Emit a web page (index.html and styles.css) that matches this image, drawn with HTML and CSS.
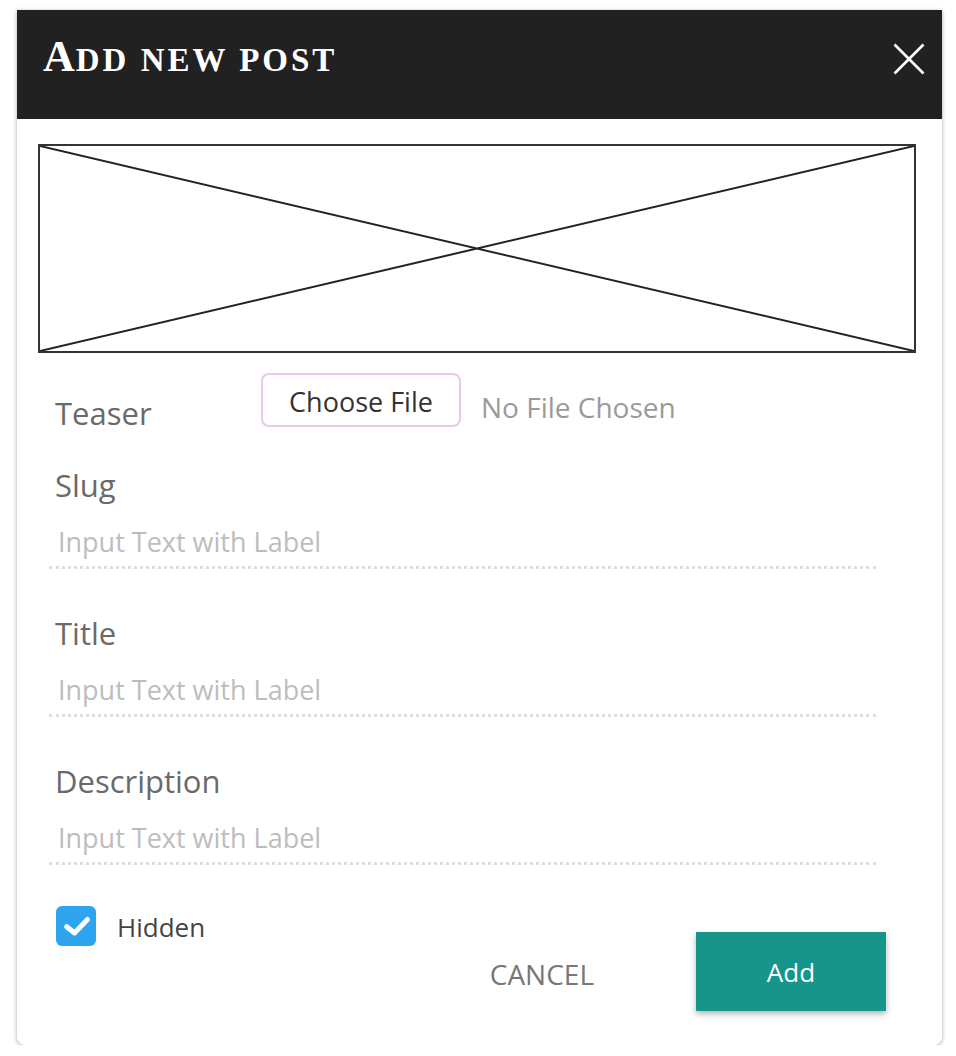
FILE: index.html
```html
<!DOCTYPE html>
<html lang="en">
<head>
<meta charset="utf-8">
<title>Add new post</title>
<link rel="stylesheet" href="styles.css">
</head>
<body>
<div class="modal">
  <header class="modal-header">
    <h1 class="modal-title">Add new post</h1>
    <button class="close-btn" aria-label="Close">
      <svg width="32" height="32" viewBox="0 0 32 32"><path d="M1.5 1.5 L30.5 30.5 M30.5 1.5 L1.5 30.5" stroke="#fff" stroke-width="2.6" fill="none"/></svg>
    </button>
  </header>
  <div class="modal-body">
    <div class="image-placeholder">
      <svg class="ph-svg" viewBox="0 0 100 100" preserveAspectRatio="none"><path d="M0 0 L100 100 M100 0 L0 100" stroke="#222" stroke-width="2" vector-effect="non-scaling-stroke" fill="none"/></svg>
    </div>
    <div class="teaser-row">
      <span class="teaser-label">Teaser</span>
      <button class="file-btn">Choose File</button>
      <span class="file-status">No File Chosen</span>
    </div>
    <div class="field field-first">
      <div class="field-label">Slug</div>
      <div class="field-input">Input Text with Label</div>
    </div>
    <div class="field">
      <div class="field-label">Title</div>
      <div class="field-input">Input Text with Label</div>
    </div>
    <div class="field">
      <div class="field-label">Description</div>
      <div class="field-input">Input Text with Label</div>
    </div>
    <div class="footer">
      <label class="check">
        <span class="check-box">
          <svg width="40" height="40" viewBox="0 0 40 40"><path d="M10.7 20.7 L18.5 27 L31.5 13.5" stroke="#fff" stroke-width="5" stroke-linecap="round" stroke-linejoin="round" fill="none"/></svg>
        </span>
        <span class="check-text">Hidden</span>
      </label>
      <div class="actions">
        <button class="cancel-btn">CANCEL</button>
        <button class="add-btn">Add</button>
      </div>
    </div>
  </div>
</div>
</body>
</html>
```

FILE: styles.css
```css
* { box-sizing: border-box; }
html, body { margin: 0; padding: 0; background: #fff; }
body { font-family: "Open Sans", "Noto Sans", sans-serif; }

.modal {
  width: 925px;
  margin: 10px 0 0 17px;
  background: #fff;
  border-radius: 0 0 8px 8px;
  box-shadow: 0 1px 4px rgba(0, 0, 0, 0.35);
}

.modal-header {
  height: 109px;
  background: #212121;
  display: flex;
  align-items: center;
  justify-content: space-between;
  padding: 0 17px 0 26px;
}
.modal-title {
  margin: 0;
  padding-bottom: 16px;
  font-family: "Liberation Serif", "DejaVu Serif", serif;
  font-weight: bold;
  color: #fff;
  font-size: 33px;
  text-transform: uppercase;
  letter-spacing: 3px;
  line-height: 1;
}
.modal-title::first-letter { font-size: 44px; letter-spacing: 1px; }

.close-btn {
  background: none;
  border: 0;
  padding: 0;
  width: 32px;
  height: 32px;
  margin-bottom: 12px;
  cursor: pointer;
}
.close-btn svg { display: block; }

.modal-body { padding: 25px 26px 34px 21px; }

.image-placeholder {
  height: 209px;
  border: 2px solid #333;
}
.ph-svg { display: block; width: 100%; height: 100%; }

.teaser-row {
  display: flex;
  align-items: flex-start;
  margin-top: 20px;
  padding-left: 17px;
}
.teaser-label {
  width: 206px;
  margin-top: 22px;
  font-size: 31px;
  line-height: 36px;
  color: #6a6a6a;
}
.file-btn {
  height: 54px;
  width: 200px;
  border: 2px solid #e9cbe9;
  border-radius: 8px;
  background: #fff;
  font-family: inherit;
  font-size: 27px;
  color: #333;
  padding: 3px 0 0;
  line-height: 47px;
}
.file-status {
  margin-left: 20px;
  margin-top: 18px;
  font-size: 28px;
  line-height: 32px;
  color: #9a9a9a;
}

.field {
  margin: 46px 40px 0 11px;
}
.field-first { margin-top: 36px; }
.field-label {
  padding-left: 6px;
  font-size: 31px;
  line-height: 36px;
  color: #6a6a6a;
}
.field-input {
  margin-top: 23px;
  padding: 0 0 8px 9px;
  font-size: 27px;
  line-height: 32px;
  color: #bdbdbd;
  border-bottom: 3px dotted #dedede;
}

.footer {
  display: flex;
  justify-content: space-between;
  margin-top: 41px;
  padding-left: 18px;
  padding-right: 30px;
}
.check {
  display: flex;
  align-items: center;
  align-self: flex-start;
  gap: 21px;
}
.check-box {
  width: 40px;
  height: 40px;
  border-radius: 6px;
  background: #2ea4ee;
}
.check-box svg { display: block; }
.check-text {
  font-size: 26px;
  line-height: 32px;
  color: #444;
  margin-top: 2px;
}
.actions {
  display: flex;
  align-items: center;
  margin-top: 26px;
}
.cancel-btn {
  background: none;
  border: 0;
  padding: 0;
  margin-top: 5px;
  font-family: inherit;
  font-size: 28px;
  color: #777;
  margin-right: 102px;
}
.add-btn {
  width: 190px;
  height: 79px;
  border: 0;
  background: #17958a;
  color: #fff;
  font-family: inherit;
  font-size: 26px;
  padding-top: 2px;
  box-shadow: 0 3px 6px rgba(0, 0, 0, 0.3);
}
```
